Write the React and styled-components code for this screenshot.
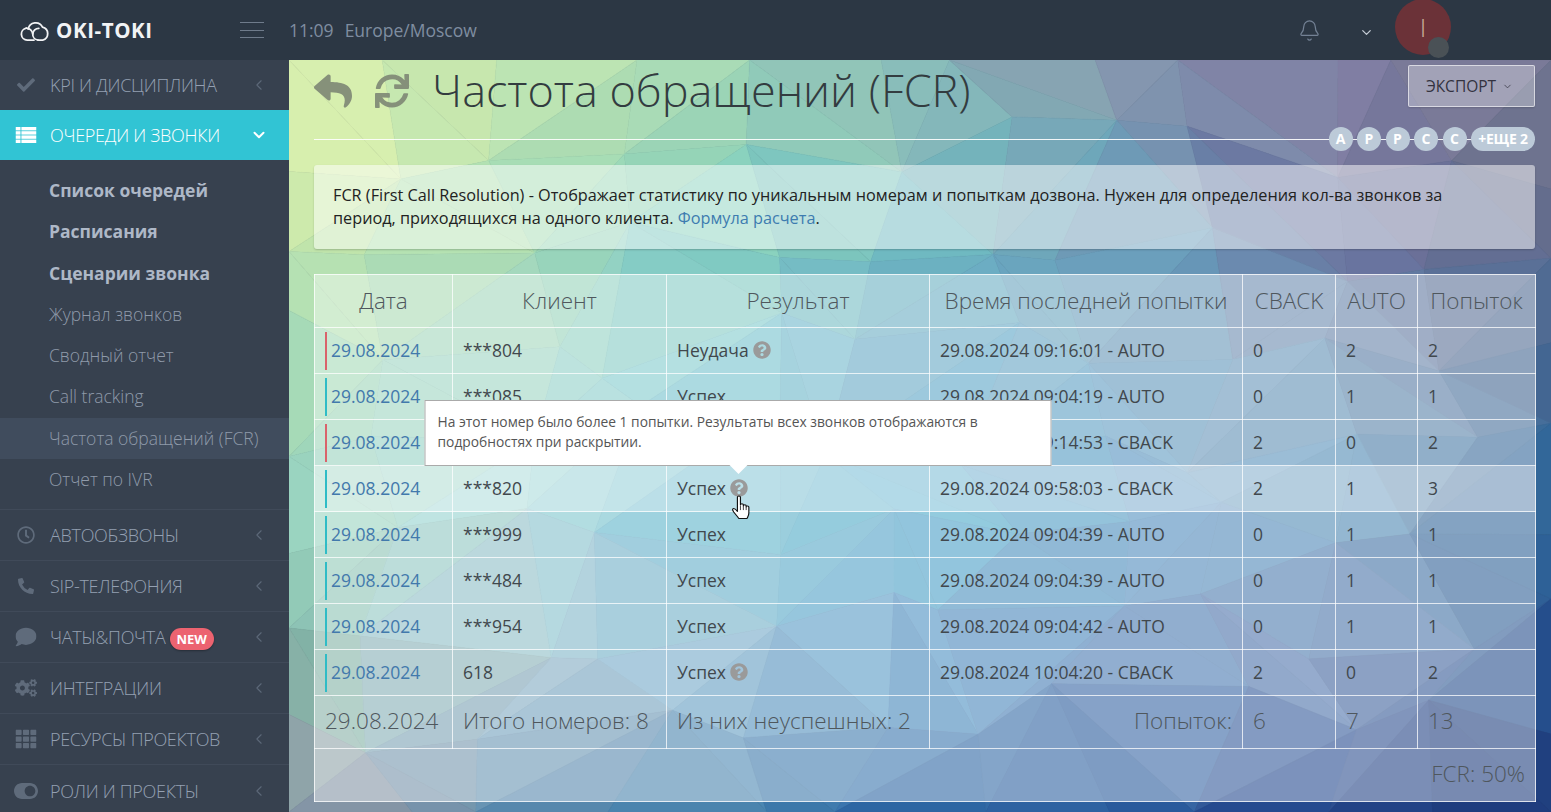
import React from "react";
import styled, { createGlobalStyle } from "styled-components";
import { FaCheck, FaRegClock, FaPhoneAlt, FaComment, FaCogs, FaTh, FaToggleOn, FaReply, FaSync, FaQuestionCircle } from "react-icons/fa";
import { ChevronLeft, ChevronDown, Bell } from "lucide-react";

const GlobalStyle = createGlobalStyle`
    html, body {
        margin: 0;
        height: 100%;
        overflow: hidden;
        font-family: "Open Sans", "Noto Sans", sans-serif;
    }
    * { box-sizing: border-box; }
`

// raw background colours sampled from the picture, the mesh interpolates between them
const FIELD = [
    ["#e8f5b0", "#c8e8b0", "#a8d8b4", "#90bcb8", "#8a98b0", "#8a85a8", "#7a7a90"],
    ["#d0eaa8", "#a8dcb0", "#88d0bc", "#70bcc0", "#6a98b4", "#6a6e9c", "#606a88"],
    ["#a8dcb4", "#a3d8c4", "#7bc8cf", "#68a6c5", "#68a0c0", "#6a8cb0", "#40608c"],
    ["#9cd4bc", "#8fd0d0", "#5ab0c8", "#47a8c8", "#4f8fc0", "#508cb5", "#255a90"],
    ["#80b8a0", "#8fb4c5", "#70a8c8", "#4a8cc0", "#4678b0", "#4f70a8", "#1c4a88"],
    ["#9a98a8", "#5a85a8", "#3a78a8", "#2a62a0", "#1a4a90", "#1a3c84", "#1a3070"],
];

const hexToRgb = hex => [1, 3, 5].map(i => parseInt(hex.slice(i, i + 2), 16));

function fieldColor(x, y, w, h, delta) {
    const fx = Math.min(0.999, Math.max(0, x / w)) * 6;
    const fy = Math.min(0.999, Math.max(0, y / h)) * 5;
    const ix = Math.floor(fx), iy = Math.floor(fy);
    const tx = fx - ix, ty = fy - iy;
    const a = hexToRgb(FIELD[iy][ix]), b = hexToRgb(FIELD[iy][ix + 1]);
    const c = hexToRgb(FIELD[iy + 1][ix]), d = hexToRgb(FIELD[iy + 1][ix + 1]);
    const out = a.map((v, i) => {
        const top = v + (b[i] - v) * tx;
        const bottom = c[i] + (d[i] - c[i]) * tx;
        return Math.round(Math.min(255, Math.max(0, top + (bottom - top) * ty + delta)));
    });
    return `rgb(${out.join(",")})`;
}

function buildMesh(w, h, cols, rows) {
    let seed = 77;
    const rnd = () => {
        seed = (seed * 1664525 + 1013904223) % 4294967296;
        return seed / 4294967296;
    };
    const pts = [];
    for (let r = 0; r <= rows; r++) {
        const line = [];
        for (let c = 0; c <= cols; c++) {
            const jx = c === 0 || c === cols ? 0 : (rnd() - 0.5) * (w / cols) * 0.8;
            const jy = r === 0 || r === rows ? 0 : (rnd() - 0.5) * (h / rows) * 0.8;
            line.push([c * w / cols + jx, r * h / rows + jy]);
        }
        pts.push(line);
    }
    const tris = [];
    const add = (a, b, c) => {
        const cx = (a[0] + b[0] + c[0]) / 3, cy = (a[1] + b[1] + c[1]) / 3;
        tris.push({
            points: [a, b, c].map(p => p.map(n => n.toFixed(1)).join(",")).join(" "),
            fill: fieldColor(cx, cy, w, h, (rnd() - 0.5) * 5),
        });
    };
    for (let r = 0; r < rows; r++) {
        for (let c = 0; c < cols; c++) {
            const tl = pts[r][c], tr = pts[r][c + 1], bl = pts[r + 1][c], br = pts[r + 1][c + 1];
            if (rnd() > 0.5) {
                add(tl, tr, bl);
                add(tr, br, bl);
            } else {
                add(tl, tr, br);
                add(tl, br, bl);
            }
        }
    }
    return tris;
}

function PolyBackdrop() {
    const tris = React.useMemo(() => buildMesh(1262, 752, 11, 8), []);
    return (
        <BackdropSvg viewBox="0 0 1262 752" preserveAspectRatio="none">
            {tris.map((t, i) => <polygon key={i} points={t.points} fill={t.fill} stroke={t.fill} strokeWidth="0.6" />)}
        </BackdropSvg>
    );
}

function CloudLogo() {
    return (
        <svg width="29" height="23" viewBox="0 0 29 22" fill="none" stroke="#f2f3f5" strokeWidth="1.8" strokeLinecap="round" strokeLinejoin="round">
            <path d="M14 20.6H7.2a6 6 0 0 1-.9-11.9" />
            <path d="M8.2 9.6a7.6 7.6 0 0 1 14.3-2 6.7 6.7 0 0 1 .2 13H18" />
            <path d="M6.4 8.7a6.2 6.2 0 0 1 6.3 5.7 6 6 0 0 0 5.3 6.2" />
            <path d="M12.8 14.4a6 6 0 0 1 6-5.6" />
        </svg>
    );
}

function QueueIcon() {
    return (
        <svg width="21" height="16" viewBox="0 0 21 16" fill="#fff">
            <rect x="0" y="0" width="21" height="3.4" />
            <rect x="0" y="4.2" width="21" height="3.4" />
            <rect x="0" y="8.4" width="21" height="3.4" />
            <rect x="0" y="12.6" width="21" height="3.4" />
            <rect x="5" y="0" width="0.9" height="16" fill="#31c4d4" />
        </svg>
    );
}

function HandCursor() {
    return (
        <HandSvg width="21" height="26" viewBox="0 0 18 25" preserveAspectRatio="none">
            <path
                d="M5.5 2.2c0-1.6 2.6-1.6 2.6 0v7.2c0-1.3 2.5-1.3 2.5 0v1c0-1.3 2.4-1.3 2.4 0v1c0-1.2 2.3-1.2 2.3.2v5.6c0 2.2-.7 3.4-1.5 5.3H6.6c-.8-1.8-2.6-3.6-4.3-6.2-.8-1.3-1.4-2.3-.7-3 .8-.8 2 .1 3.9 2.4z"
                fill="#fff"
                stroke="#111"
                strokeWidth="1"
                strokeLinejoin="round"
            />
            <path d="M8.1 10v4.5M10.6 10.4v4.1M13 11.4v3.1" stroke="#111" strokeWidth="0.7" fill="none" />
        </HandSvg>
    );
}

const MENU_BEFORE = [
    { label: "KPI и дисциплина", icon: FaCheck, size: 18 },
];
const MENU_AFTER = [
    { label: "Автообзвоны", icon: FaRegClock, size: 18 },
    { label: "SIP-телефония", icon: FaPhoneAlt, size: 16 },
    { label: "Чаты&почта", icon: FaComment, size: 21, isNew: true },
    { label: "Интеграции", icon: FaCogs, size: 22 },
    { label: "Ресурсы проектов", icon: FaTh, size: 21 },
    { label: "Роли и проекты", icon: FaToggleOn, size: 24 },
];
const SUB_ITEMS = [
    { label: "Список очередей", bold: true },
    { label: "Расписания", bold: true },
    { label: "Сценарии звонка", bold: true },
    { label: "Журнал звонков" },
    { label: "Сводный отчет" },
    { label: "Call tracking" },
    { label: "Частота обращений (FCR)", current: true },
    { label: "Отчет по IVR" },
];
const ROWS = [
    { client: "***804", result: "Неудача", help: true, fail: true, time: "29.08.2024 09:16:01 - AUTO", cback: 0, auto: 2, total: 2 },
    { client: "***085", result: "Успех", time: "29.08.2024 09:04:19 - AUTO", cback: 0, auto: 1, total: 1 },
    { client: "***713", result: "Неудача", fail: true, time: "29.08.2024 09:14:53 - CBACK", cback: 2, auto: 0, total: 2 },
    { client: "***820", result: "Успех", help: true, hovered: true, time: "29.08.2024 09:58:03 - CBACK", cback: 2, auto: 1, total: 3 },
    { client: "***999", result: "Успех", time: "29.08.2024 09:04:39 - AUTO", cback: 0, auto: 1, total: 1 },
    { client: "***484", result: "Успех", time: "29.08.2024 09:04:39 - AUTO", cback: 0, auto: 1, total: 1 },
    { client: "***954", result: "Успех", time: "29.08.2024 09:04:42 - AUTO", cback: 0, auto: 1, total: 1 },
    { client: "618", result: "Успех", help: true, time: "29.08.2024 10:04:20 - CBACK", cback: 2, auto: 0, total: 2 },
];

function MenuRow({ item }) {
    const Icon = item.icon;
    return (
        <NavItem>
            <NavIcon><Icon size={item.size} /></NavIcon>
            <NavLabel>{item.label}</NavLabel>
            {item.isNew && <NewBadge>NEW</NewBadge>}
            <NavChevron><ChevronLeft size={17} strokeWidth={1.6} /></NavChevron>
        </NavItem>
    );
}

export default function App() {
    return (
        <Page>
            <GlobalStyle />
            <TopBar>
                <Logo>
                    <CloudLogo />
                    <LogoText>OKI-TOKI</LogoText>
                </Logo>
                <Burger><span /><span /><span /></Burger>
                <Clock>11:09<ClockZone>Europe/Moscow</ClockZone></Clock>
                <BellIcon><Bell size={23} strokeWidth={1.3} /></BellIcon>
                <UserChevron><ChevronDown size={15} strokeWidth={2} /></UserChevron>
                <Avatar>I<AvatarDot /></Avatar>
            </TopBar>
            <Body>
                <Sidebar>
                    {MENU_BEFORE.map(item => <MenuRow key={item.label} item={item} />)}
                    <ActiveItem>
                        <ActiveIcon><QueueIcon /></ActiveIcon>
                        <NavLabel>Очереди и звонки</NavLabel>
                        <NavChevron><ChevronDown size={18} strokeWidth={2.6} /></NavChevron>
                    </ActiveItem>
                    <SubMenu>
                        {SUB_ITEMS.map(s => <SubItem key={s.label} $bold={s.bold} $current={s.current}>{s.label}</SubItem>)}
                    </SubMenu>
                    {MENU_AFTER.map(item => <MenuRow key={item.label} item={item} />)}
                </Sidebar>
                <Main>
                    <PolyBackdrop />
                    <Content>
                        <TitleRow>
                            <TitleIcon><FaReply size={38} /></TitleIcon>
                            <TitleIcon><FaSync size={34} /></TitleIcon>
                            <Title>Частота обращений (FCR)</Title>
                            <ExportButton>Экспорт<ChevronDown size={11} strokeWidth={1.6} /></ExportButton>
                        </TitleRow>
                        <FilterLine>
                            {["A", "Р", "Р", "С", "С"].map((b, i) => <FilterBadge key={i}>{b}</FilterBadge>)}
                            <FilterMore>+ЕЩЕ 2</FilterMore>
                        </FilterLine>
                        <Notice>
                            FCR (First Call Resolution) - Отображает статистику по уникальным номерам и попыткам дозвона. Нужен для определения кол-ва звонков за период, приходящихся на одного клиента. <NoticeLink>Формула расчета</NoticeLink>.
                        </Notice>
                        <Table>
                            <colgroup>
                                <col width="138" />
                                <col width="214" />
                                <col width="263" />
                                <col width="313" />
                                <col width="93" />
                                <col width="82" />
                                <col width="118" />
                            </colgroup>
                            <thead>
                                <tr>
                                    <HeadCell>Дата</HeadCell>
                                    <HeadCell>Клиент</HeadCell>
                                    <HeadCell>Результат</HeadCell>
                                    <HeadCell>Время последней попытки</HeadCell>
                                    <HeadCell>CBACK</HeadCell>
                                    <HeadCell>AUTO</HeadCell>
                                    <HeadCell>Попыток</HeadCell>
                                </tr>
                            </thead>
                            <tbody>
                                {ROWS.map((row, i) => (
                                    <DataRow key={i} $hovered={row.hovered}>
                                        <DateCell><DateMark $fail={row.fail}>29.08.2024</DateMark></DateCell>
                                        <Cell>{row.client}</Cell>
                                        <Cell>
                                            {row.result}
                                            {row.help && (
                                                <HelpWrap>
                                                    <FaQuestionCircle size={18} />
                                                    {row.hovered && (
                                                        <>
                                                            <Tooltip>На этот номер было более 1 попытки. Результаты всех звонков отображаются в подробностях при раскрытии.</Tooltip>
                                                            <HandCursor />
                                                        </>
                                                    )}
                                                </HelpWrap>
                                            )}
                                        </Cell>
                                        <Cell>{row.time}</Cell>
                                        <Cell>{row.cback}</Cell>
                                        <Cell>{row.auto}</Cell>
                                        <Cell>{row.total}</Cell>
                                    </DataRow>
                                ))}
                            </tbody>
                            <tfoot>
                                <tr>
                                    <FootCell>29.08.2024</FootCell>
                                    <FootCell>Итого номеров: 8</FootCell>
                                    <FootCell>Из них неуспешных: 2</FootCell>
                                    <FootCell $right>Попыток:</FootCell>
                                    <FootCell>6</FootCell>
                                    <FootCell>7</FootCell>
                                    <FootCell>13</FootCell>
                                </tr>
                                <tr>
                                    <FootCell colSpan={7} $right>FCR: 50%</FootCell>
                                </tr>
                            </tfoot>
                        </Table>
                    </Content>
                </Main>
            </Body>
        </Page>
    );
}

const Page = styled.div`
    display: flex;
    flex-direction: column;
    height: 812px;
    overflow: hidden;
    background: #37414f;
`
const TopBar = styled.header`
    display: flex;
    align-items: center;
    flex: 0 0 60px;
    height: 60px;
    padding-left: 20px;
    background: #2c3744;
`
const Logo = styled.div`
    display: flex;
    align-items: center;
    gap: 7px;
    width: 220px;
`
const LogoText = styled.span`
    color: #f2f3f5;
    font-size: 20.5px;
    font-weight: 700;
    letter-spacing: 0.6px;
`
const Burger = styled.div`
    display: flex;
    flex-direction: column;
    gap: 6.5px;
    width: 24px;
    margin-right: 25px;
    span {
        height: 1px;
        background: #6f7b8b;
    }
`
const Clock = styled.div`
    flex: 1;
    color: #7f8da0;
    font-size: 17.5px;
`
const ClockZone = styled.span`
    margin-left: 11px;
`
const BellIcon = styled.div`
    display: flex;
    color: #738194;
    margin-right: 38px;
`
const UserChevron = styled.div`
    display: flex;
    color: #c5ccd5;
    margin-right: 21px;
    margin-top: 5px;
`
const Avatar = styled.div`
    position: relative;
    align-self: flex-start;
    width: 56px;
    height: 56px;
    margin-top: -1px;
    margin-right: 100px;
    border-radius: 50%;
    background: #6b3238;
    color: #c8b09a;
    font-size: 26px;
    font-weight: 300;
    line-height: 56px;
    text-align: center;
`
const AvatarDot = styled.span`
    position: absolute;
    right: 2px;
    bottom: -3px;
    width: 21px;
    height: 21px;
    border-radius: 50%;
    background: #4a5156;
`
const Body = styled.div`
    display: flex;
    flex: 1;
    min-height: 0;
`
const Sidebar = styled.nav`
    flex: 0 0 289px;
    background: #37414f;
`
const NavItem = styled.div`
    display: flex;
    align-items: center;
    height: 51px;
    padding-left: 50px;
    border-bottom: 1px solid #404a59;
    color: #94a0b2;
    position: relative;
    &:first-child {
        height: 50px;
        border-bottom: 0;
    }
    &:last-child {
        border-bottom: 0;
    }
`
const NavIcon = styled.span`
    position: absolute;
    left: 26px;
    top: 50%;
    transform: translate(-50%, -50%);
    display: flex;
    color: #5f6b7b;
`
const ActiveIcon = styled(NavIcon)`
    color: #fff;
`
const NavLabel = styled.span`
    font-size: 18px;
    font-weight: 300;
    text-transform: uppercase;
    letter-spacing: -0.3px;
    white-space: nowrap;
`
const NewBadge = styled.span`
    margin: 3px 0 0 4px;
    padding: 0 7px;
    height: 22px;
    border-radius: 11px;
    background: #ec6370;
    color: #fff;
    font-size: 13px;
    font-weight: 700;
    line-height: 22px;
    box-shadow: 0 1px 2px rgba(0, 0, 0, 0.3);
`
const NavChevron = styled.span`
    position: absolute;
    left: 259px;
    top: 50%;
    transform: translate(-50%, -50%);
    display: flex;
    color: #5b6777;
`
const ActiveItem = styled(NavItem)`
    height: 50px;
    border-bottom: 0;
    background: #31c4d4;
    color: #fff;
    ${NavChevron} {
        color: #fff;
    }
`
const SubMenu = styled.div`
    display: flex;
    flex-direction: column;
    padding: 10px 0 9px;
    border-bottom: 1px solid #404a59;
`
const SubItem = styled.div`
    height: 41.3px;
    padding-left: 49px;
    color: ${p => (p.$bold ? "#aeb8c7" : "#8f9aaa")};
    background: ${p => (p.$current ? "#404c5d" : "transparent")};
    font-size: 17.5px;
    font-weight: ${p => (p.$bold ? 700 : 300)};
    line-height: 41.3px;
`
const Main = styled.main`
    position: relative;
    flex: 1;
    overflow: hidden;
`
const BackdropSvg = styled.svg`
    position: absolute;
    inset: 0;
    width: 100%;
    height: 100%;
`
const Content = styled.div`
    position: relative;
    padding: 5px 16px 0 25px;
`
const TitleRow = styled.div`
    display: flex;
    align-items: center;
    height: 52px;
`
const TitleIcon = styled.span`
    display: flex;
    margin-right: 23px;
    color: #828c78;
    opacity: 0.95;
`
const Title = styled.h1`
    flex: 1;
    margin: -2px 0 0;
    color: #333c40;
    font-size: 45px;
    font-weight: 300;
    line-height: 52px;
    white-space: nowrap;
`
const ExportButton = styled.button`
    display: flex;
    align-items: center;
    justify-content: center;
    gap: 6px;
    width: 127px;
    height: 42px;
    margin-top: -10px;
    padding: 0 4px 0 0;
    border: 1px solid rgba(255, 255, 255, 0.6);
    border-radius: 2px;
    background: rgba(255, 255, 255, 0.3);
    color: #33323f;
    font-family: inherit;
    font-size: 15.5px;
    font-weight: 500;
    text-transform: uppercase;
    box-shadow: 0 1px 2px rgba(0, 0, 0, 0.15);
`
const FilterLine = styled.div`
    display: flex;
    align-items: center;
    justify-content: flex-end;
    gap: 4.5px;
    height: 24px;
    margin-top: 10px;
    background: linear-gradient(rgba(255, 255, 255, 0.9), rgba(255, 255, 255, 0.9)) center / 100% 1px no-repeat;
`
const FilterBadge = styled.span`
    flex: 0 0 24px;
    height: 24px;
    border-radius: 50%;
    background: #bccad8;
    color: #fff;
    font-size: 14px;
    font-weight: 700;
    line-height: 24px;
    text-align: center;
`
const FilterMore = styled(FilterBadge)`
    flex: 0 0 64px;
    border-radius: 12px;
    letter-spacing: -0.2px;
`
const Notice = styled.div`
    height: 84px;
    margin-top: 14px;
    padding: 19px 60px 0 19px;
    border-radius: 3px;
    background: rgba(255, 255, 255, 0.5);
    color: #222;
    font-size: 16.25px;
    line-height: 23px;
    box-shadow: 0 1px 2px rgba(0, 0, 0, 0.2);
`
const NoticeLink = styled.a`
    color: #3d7cb0;
`
const Table = styled.table`
    width: 1221px;
    margin-top: 25px;
    border-collapse: collapse;
    table-layout: fixed;
    background: rgba(255, 255, 255, 0.4);
`
const HeadCell = styled.th`
    height: 53px;
    padding: 0 8px 2px;
    border: 1px solid rgba(255, 255, 255, 0.75);
    color: #4f575d;
    font-size: 22.5px;
    font-weight: 300;
    text-align: center;
    white-space: nowrap;
`
const DataRow = styled.tr`
    background: ${p => (p.$hovered ? "rgba(255, 255, 255, 0.3)" : "transparent")};
`
const Cell = styled.td`
    height: 46px;
    padding: 0 10px 2px;
    border: 1px solid rgba(255, 255, 255, 0.75);
    color: #41484d;
    font-size: 17.5px;
    white-space: nowrap;
`
const DateCell = styled(Cell)`
    padding-bottom: 0;
    color: #4279ac;
`
const DateMark = styled.span`
    display: block;
    height: 38px;
    padding-left: 4px;
    border-left: 2.5px solid ${p => (p.$fail ? "#d9636b" : "#2fbcc6")};
    line-height: 36px;
`
const HelpWrap = styled.span`
    position: relative;
    display: inline-flex;
    margin-left: 4px;
    vertical-align: -2px;
    color: #9a9a9a;
`
const Tooltip = styled.span`
    position: absolute;
    bottom: calc(100% + 13px);
    left: 50%;
    z-index: 2;
    width: 627px;
    height: 66px;
    margin-left: -1px;
    padding: 11px 12px;
    border: 1px solid #aaa;
    background: #fff;
    color: #555;
    font-size: 13.8px;
    line-height: 20px;
    white-space: normal;
    transform: translateX(-50%);
    &::after {
        content: "";
        position: absolute;
        left: 50%;
        bottom: -9px;
        margin-left: -9px;
        border-left: 9px solid transparent;
        border-right: 9px solid transparent;
        border-top: 9px solid #fff;
    }
`
const HandSvg = styled.svg`
    position: absolute;
    left: 1px;
    top: 16px;
    z-index: 3;
`
const FootCell = styled.td`
    height: 53px;
    padding: 0 10px 3px;
    border: 1px solid rgba(255, 255, 255, 0.75);
    color: #4f575d;
    font-size: 22.5px;
    font-weight: 300;
    text-align: ${p => (p.$right ? "right" : "left")};
    white-space: nowrap;
`
